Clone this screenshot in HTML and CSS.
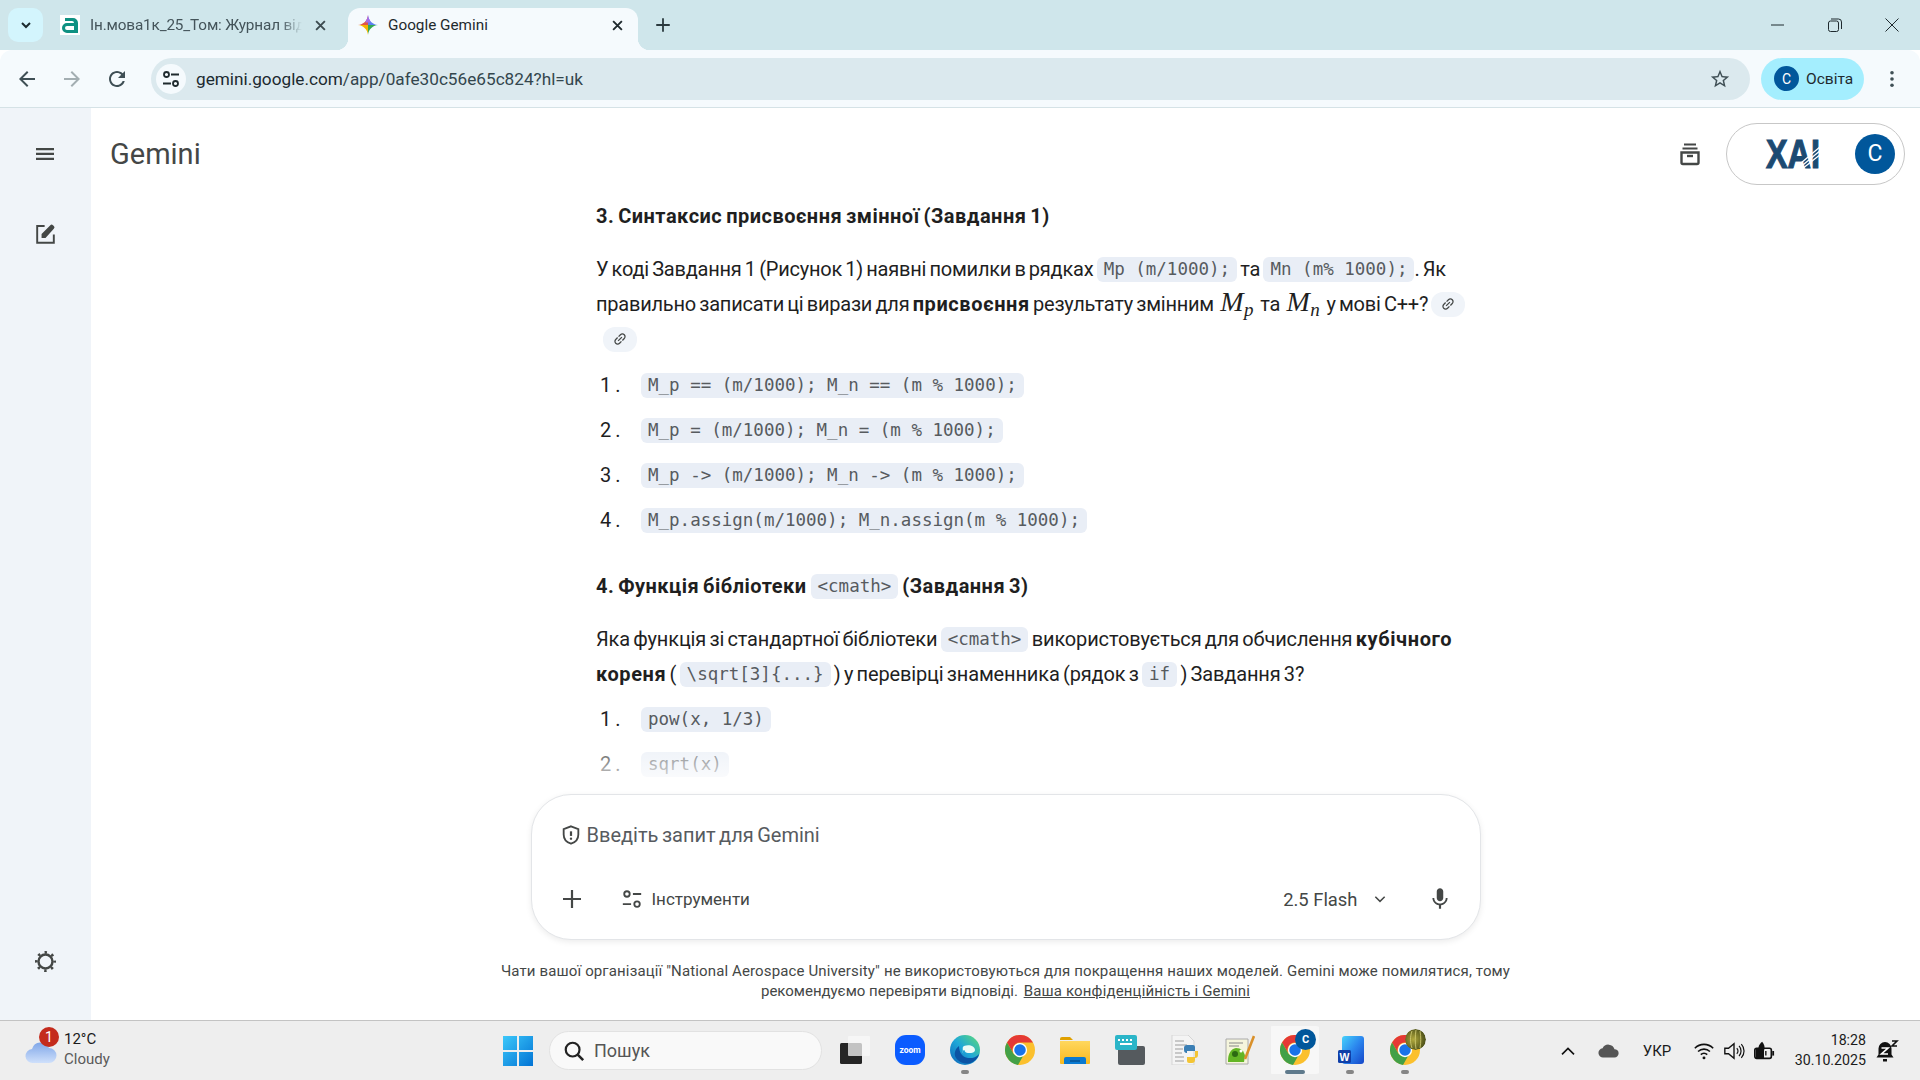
FILE: index.html
```html
<!DOCTYPE html>
<html lang="uk">
<head>
<meta charset="utf-8">
<title>Google Gemini</title>
<link rel="stylesheet" href="styles.css">
</head>
<body>
<svg class="defs" width="0" height="0">
  <defs>
    <symbol id="chrome" viewBox="0 0 24 24">
      <circle cx="12" cy="12" r="12" fill="#fbc02d"/>
      <path d="M1.6 6A12 12 0 0 1 22.4 6H12A6 6 0 0 0 6.8 15Z" fill="#e53935"/>
      <path d="M1.6 6A12 12 0 0 0 10.4 23.9L15.5 15A6 6 0 0 1 6.8 15Z" fill="#43a047"/>
      <circle cx="12" cy="12" r="5.7" fill="#fff"/>
      <circle cx="12" cy="12" r="4.6" fill="#1a73e8"/>
    </symbol>
    <symbol id="link" viewBox="0 0 24 24">
      <path transform="rotate(-45 12 12)" d="M3.9 12c0-1.71 1.39-3.1 3.1-3.1h4V7H7c-2.76 0-5 2.24-5 5s2.24 5 5 5h4v-1.9H7c-1.71 0-3.1-1.39-3.1-3.1zM8 13h8v-2H8v2zm9-6h-4v1.9h4c1.71 0 3.1 1.39 3.1 3.1s-1.39 3.1-3.1 3.1h-4V17h4c2.76 0 5-2.24 5-5s-2.24-5-5-5z"/>
    </symbol>
    <clipPath id="sparkclip">
      <path d="M12 0C12.600 6.600 17.400 11.400 24 12 17.400 12.600 12.600 17.400 12 24 11.400 17.400 6.600 12.600 0 12 6.600 11.400 11.400 6.600 12 0Z"/>
    </clipPath>
    <linearGradient id="winlogo" x1="0" y1="0" x2="1" y2="1">
      <stop offset="0" stop-color="#3cc8fa"/>
      <stop offset="1" stop-color="#0273d4"/>
    </linearGradient>
    <linearGradient id="edgeg" x1="0" y1="1" x2="1" y2="0">
      <stop offset="0" stop-color="#0c62b8"/>
      <stop offset=".5" stop-color="#1fa8d8"/>
      <stop offset="1" stop-color="#5fdc74"/>
    </linearGradient>
    <linearGradient id="wordg" x1="0" y1="0" x2="1" y2="1">
      <stop offset="0" stop-color="#46d2fb"/>
      <stop offset=".5" stop-color="#2b86ee"/>
      <stop offset="1" stop-color="#1546c8"/>
    </linearGradient>
    <linearGradient id="folderg" x1="0" y1="0" x2="0" y2="1">
      <stop offset="0" stop-color="#ffd75e"/>
      <stop offset="1" stop-color="#f9b91e"/>
    </linearGradient>
    <radialGradient id="olive" cx=".4" cy=".5" r=".6">
      <stop offset="0" stop-color="#b0a83c"/>
      <stop offset="1" stop-color="#4a4e18"/>
    </radialGradient>
  </defs>
</svg>

<div class="window">
  <div class="tabstrip">
    <button class="tabsearch"><svg class="i16" viewBox="0 0 24 24"><path d="M6 9l6 6 6-6" fill="none" stroke="#1b2a2e" stroke-width="3"/></svg></button>
    <div class="tab">
      <svg class="favicon" viewBox="0 0 20 20"><rect width="20" height="20" fill="#fff"/><path d="M5 3h8a5 5 0 0 1 5 5v10H7a5 5 0 0 1-5-5 5 5 0 0 1 5-5h7a2 2 0 0 0-2-2H5z M7 11a2 2 0 0 0 0 4h7v-4z" fill="#0f9182" fill-rule="evenodd"/></svg>
      <span class="tabtitle">Ін.мова1к_25_Том: Журнал відвідування</span>
      <svg class="tabclose" viewBox="0 0 24 24"><path d="M5 5l14 14M19 5L5 19" stroke="#3d4b50" stroke-width="3"/></svg>
    </div>
    <div class="tab active">
      <svg class="favicon" viewBox="0 0 24 24"><g clip-path="url(#sparkclip)"><rect width="12" height="12" fill="#e0544a"/><rect x="12" width="12" height="12" fill="#5a80f0"/><rect y="12" width="12" height="12" fill="#f4b400"/><rect x="12" y="12" width="12" height="12" fill="#34a853"/><rect x="9" y="0" width="6" height="9" fill="#a56be8"/></g></svg>
      <span class="tabtitle">Google Gemini</span>
      <svg class="tabclose" viewBox="0 0 24 24"><path d="M5 5l14 14M19 5L5 19" stroke="#1f2a2e" stroke-width="3"/></svg>
    </div>
    <svg class="newtab" viewBox="0 0 24 24"><path d="M12 3v18M3 12h18" stroke="#2b3a3f" stroke-width="2.4"/></svg>
    <div class="winctl">
      <svg class="wc" viewBox="0 0 14 14"><path d="M0 7h13" stroke="#1f2a2e" stroke-width="1"/></svg>
      <svg class="wc" viewBox="0 0 14 14"><rect x=".5" y="3" width="10" height="10.5" rx="2" fill="none" stroke="#1f2a2e"/><path d="M3 1h7.5a3 3 0 0 1 3 3v7" fill="none" stroke="#1f2a2e"/></svg>
      <svg class="wc" viewBox="0 0 14 14"><path d="M.5.5l13 13M13.500.5l-13 13" stroke="#1f2a2e"/></svg>
    </div>
  </div>

  <div class="toolbar">
    <svg class="navbtn" viewBox="0 0 24 24"><path fill="#3f4f55" d="M20 11H7.830l5.590-5.590L12 4l-8 8 8 8 1.410-1.410L7.830 13H20v-2z"/></svg>
    <svg class="navbtn" viewBox="0 0 24 24"><path fill="#a3aeb2" d="M12 4l-1.410 1.410L16.170 11H4v2h12.170l-5.580 5.590L12 20l8-8z"/></svg>
    <svg class="navbtn" viewBox="0 0 24 24"><path fill="#3f4f55" d="M17.650 6.350C16.200 4.900 14.210 4 12 4c-4.420 0-7.990 3.580-7.990 8s3.570 8 7.990 8c3.730 0 6.840-2.550 7.730-6h-2.080c-.820 2.330-3.040 4-5.650 4-3.310 0-6-2.690-6-6s2.690-6 6-6c1.660 0 3.140.690 4.220 1.780L13 11h7V4l-2.350 2.350z"/></svg>
    <div class="omnibox">
      <span class="siteinfo"><svg class="i20" viewBox="0 0 20 20"><circle cx="5.500" cy="5.500" r="2.500" fill="none" stroke="#1f2a2e" stroke-width="1.800"/><path d="M10 5.500h8M2 14.500h8" stroke="#1f2a2e" stroke-width="1.800"/><circle cx="14.500" cy="14.500" r="2.500" fill="none" stroke="#1f2a2e" stroke-width="1.800"/></svg></span>
      <span class="url">gemini.google.com<span class="urlpath">/app/0afe30c56e65c824?hl=uk</span></span>
      <svg class="star" viewBox="0 0 24 24"><path fill="#3f4f55" d="M22 9.240l-7.190-.620L12 2 9.190 8.630 2 9.240l5.460 4.730L5.820 21 12 17.270 18.180 21l-1.630-7.030L22 9.240zM12 15.400l-3.760 2.270 1-4.280-3.320-2.880 4.380-.380L12 6.100l1.710 4.040 4.380.380-3.320 2.880 1 4.280L12 15.400z"/></svg>
    </div>
    <div class="profile"><span class="avatar small">C</span><span>Освіта</span></div>
    <svg class="menudots" viewBox="0 0 6 20"><circle cx="3" cy="3" r="2" fill="#3f4f55"/><circle cx="3" cy="10" r="2" fill="#3f4f55"/><circle cx="3" cy="17" r="2" fill="#3f4f55"/></svg>
  </div>

  <div class="app">
    <aside class="sidebar">
      <svg class="side-icon menu" viewBox="0 0 24 24"><path fill="#444746" d="M3 18h18v-2.200H3V18zm0-5h18v-2.200H3V13zm0-7v2.200h18V6H3z"/></svg>
      <svg class="side-icon newchat" viewBox="0 0 24 24"><path d="M11 3.500H2.500v19h19V13" fill="none" stroke="#444746" stroke-width="2.200"/><path d="M7.500 17v-4.500L17.500 2.500a2 2 0 0 1 3 0l1 1a2 2 0 0 1 0 3L12 17z" fill="#444746"/></svg>
      <svg class="side-icon gear" viewBox="0 0 24 24"><circle cx="12" cy="12" r="8" fill="none" stroke="#444746" stroke-width="2.800"/><circle cx="12" cy="12" r="10.500" fill="none" stroke="#444746" stroke-width="3" stroke-dasharray="2.800 5.447" stroke-dashoffset="1.400"/></svg>
    </aside>

    <main class="main">
      <header class="topbar">
        <div class="brand">Gemini</div>
        <svg class="archive" viewBox="0 0 24 24"><path d="M6 2.500h12M4.500 6.500h15" stroke="#444746" stroke-width="2.200"/><path d="M3.500 10.500h17v10a1.500 1.500 0 0 1-1.500 1.500H5a1.500 1.500 0 0 1-1.500-1.500z" fill="none" stroke="#444746" stroke-width="2.400"/><path d="M9 14h6" stroke="#444746" stroke-width="2.400"/></svg>
        <div class="account">
          <svg class="xai" viewBox="0 0 56 32">
            <text x="1" y="30" textLength="54" lengthAdjust="spacingAndGlyphs" class="xai-text">XAI</text>
            <path d="M29 31L56 8M33 31L56 12M37 31L56 16" stroke="#fff" stroke-width="1.300"/>
          </svg>
          <span class="avatar big">C</span>
        </div>
      </header>

      <section class="chat">
        <div class="column">
          <h3 class="qhead">3. Синтаксис присвоєння змінної (Завдання 1)</h3>
          <p class="para">У коді Завдання 1 (Рисунок 1) наявні помилки в рядках <code>Mp (m/1000);</code> та <code>Mn (m% 1000);</code>. Як правильно записати ці вирази для <b>присвоєння</b> результату змінним <span class="math"><i>M</i><sub>p</sub></span> та <span class="math"><i>M</i><sub>n</sub></span> у мові C++? <span class="linkchip"><svg class="linkicon"><use href="#link"/></svg></span> <span class="linkchip wrapped"><svg class="linkicon"><use href="#link"/></svg></span></p>
          <ol class="opts first">
            <li><span class="num">1.</span><code>M_p == (m/1000); M_n == (m % 1000);</code></li>
            <li><span class="num">2.</span><code>M_p = (m/1000); M_n = (m % 1000);</code></li>
            <li><span class="num">3.</span><code>M_p -&gt; (m/1000); M_n -&gt; (m % 1000);</code></li>
            <li><span class="num">4.</span><code>M_p.assign(m/1000); M_n.assign(m % 1000);</code></li>
          </ol>
          <h3 class="qhead second">4. Функція бібліотеки <code>&lt;cmath&gt;</code> (Завдання 3)</h3>
          <p class="para loose">Яка функція зі стандартної бібліотеки <code>&lt;cmath&gt;</code> використовується для обчислення <b>кубічного кореня</b> ( <code>\sqrt[3]{...}</code> ) у перевірці знаменника (рядок з <code>if</code> ) Завдання 3?</p>
          <ol class="opts">
            <li><span class="num">1.</span><code>pow(x, 1/3)</code></li>
            <li><span class="num">2.</span><code>sqrt(x)</code></li>
          </ol>
        </div>
      </section>

      <div class="composer">
        <div class="prompt">
          <svg class="shield" viewBox="0 0 24 24"><path d="M12 2.500l8 3v6c0 5-3.400 8.600-8 10-4.600-1.400-8-5-8-10v-6z" fill="none" stroke="#444746" stroke-width="2"/><path d="M12 8v5" stroke="#444746" stroke-width="2.400"/><circle cx="12" cy="16" r="1.300" fill="#444746"/></svg>
          <span>Введіть запит для Gemini</span>
        </div>
        <div class="actions">
          <svg class="plus" viewBox="0 0 24 24"><path d="M12 3v18M3 12h18" stroke="#444746" stroke-width="2.200"/></svg>
          <svg class="tune" viewBox="0 0 24 24"><circle cx="6.500" cy="6.500" r="3" fill="none" stroke="#444746" stroke-width="2"/><path d="M13 6.500h9M2 17.500h9" stroke="#444746" stroke-width="2"/><circle cx="17.500" cy="17.500" r="3" fill="none" stroke="#444746" stroke-width="2"/></svg>
          <span class="tools">Інструменти</span>
          <span class="model">2.5 Flash</span>
          <svg class="chev" viewBox="0 0 24 24"><path d="M4 8l8 8 8-8" fill="none" stroke="#444746" stroke-width="2.600"/></svg>
          <svg class="mic" viewBox="0 0 24 24"><path fill="#444746" d="M12 14c1.660 0 2.990-1.340 2.990-3L15 5c0-1.660-1.340-3-3-3S9 3.340 9 5v6c0 1.660 1.340 3 3 3zm5.300-3c0 3-2.540 5.100-5.300 5.100S6.700 14 6.700 11H5c0 3.410 2.720 6.230 6 6.720V21h2v-3.280c3.280-.480 6-3.300 6-6.720h-1.700z"/></svg>
        </div>
      </div>
      <p class="disclaimer"><span class="dline">Чати вашої організації "National Aerospace University" не використовуються для покращення наших моделей. Gemini може помилятися, тому</span><br>рекомендуємо перевіряти відповіді. <a class="dlink">Ваша конфіденційність і Gemini</a></p>
    </main>
  </div>

  <footer class="taskbar">
    <div class="weather">
      <svg class="cloud" viewBox="0 0 32 26"><defs><linearGradient id="cl" x1="0" y1="0" x2="0" y2="1"><stop offset="0" stop-color="#7fa6e8"/><stop offset="1" stop-color="#cfe0fb"/></linearGradient></defs><path d="M8 24a7 7 0 0 1-1-14 9 9 0 0 1 17-1 7.500 7.500 0 0 1 0 15z" fill="url(#cl)"/></svg>
      <span class="badge">1</span>
      <div class="wtext"><span class="wtemp">12°C</span><span class="wdesc">Cloudy</span></div>
    </div>
    <button class="tb"><svg class="tbi" viewBox="0 0 30 30"><path fill="url(#winlogo)" d="M0 0h14v14H0zM16 0h14v14H16zM0 16h14v14H0zM16 16h14v14H16z"/></svg></button>
    <div class="search">
      <svg class="i22" viewBox="0 0 24 24"><circle cx="10.500" cy="10.500" r="7.500" fill="none" stroke="#222" stroke-width="2.400"/><path d="M16 16l6 6" stroke="#222" stroke-width="2.800"/></svg>
      <span>Пошук</span>
    </div>
    <div class="apps">
      <button class="tb"><svg class="tbi" viewBox="0 0 30 30"><rect x="0" y="8" width="22" height="21" rx="1.500" fill="#252525"/><rect x="8" y="1" width="22" height="20" rx="1" fill="#f8f8f8" opacity=".75"/></svg></button>
      <button class="tb"><svg class="tbi" viewBox="0 0 30 30"><rect width="30" height="30" rx="11" fill="#0b5cff"/><text x="15" y="18" class="zoomtxt">zoom</text></svg></button>
      <button class="tb dot"><svg class="tbi" viewBox="0 0 30 30"><circle cx="15" cy="15" r="15" fill="url(#edgeg)"/><path d="M14 11c5-2 11 0 11 4 0 2.500-3 3-6 3-3.500 0-4.500-1.500-4.500-3-1.500 0-2.500 2-1.500 3 2 .5 0 0 0 0 0-4-1-6 1-7z" fill="#ecfbf6"/><path d="M9 11c-4 3-5.500 8-3 12 3 4.500 10 7 15 5 4-1.500 7-5 8-9-3 3.500-7 4.500-11 4-6-.8-9-6-9-12z" fill="#0b53a4"/></svg></button>
      <button class="tb"><svg class="tbi"><use href="#chrome"/></svg></button>
      <button class="tb"><svg class="tbi" viewBox="0 0 30 30"><path d="M0 4a2 2 0 0 1 2-2h8l3 3h-13z" fill="#e0a000"/><path d="M0 6h30v22a1 1 0 0 1-1 1H1a1 1 0 0 1-1-1z" fill="url(#folderg)"/><path d="M4 24a2 2 0 0 1 2-2h18a2 2 0 0 1 2 2v5H4z" fill="#0a7ad1"/><path d="M10 26h10" stroke="#054f90" stroke-width="1.400"/></svg></button>
      <button class="tb"><svg class="tbi" viewBox="0 0 30 30"><rect x="3" y="11" width="27" height="19" rx="2" fill="#555a5e"/><rect y="0" width="22" height="15" rx="2" fill="#2bb5c8"/><path d="M3 5h2M7 5h2M11 5h2M15 5h2M5 9h12" stroke="#fff" stroke-width="2"/></svg></button>
      <button class="tb"><svg class="tbi" viewBox="0 0 30 30"><path d="M2 0h16l6 6v24H2z" fill="#f4f4f4" stroke="#d5d5d5"/><path d="M5 6h9M5 10h12M5 14h8M5 18h7M5 22h9M5 26h9" stroke="#c8c8c8" stroke-width="2"/><path d="M18 10h5a2 2 0 0 1 2 2v4h-8v2h-1a3 3 0 0 1-2-3v-2a3 3 0 0 1 3-3h1z" fill="#3b7fb5"/><path d="M28 16v4a3 3 0 0 1-3 3v2a3 3 0 0 1-3 3h-3a2 2 0 0 1-2-2v-4h8v-6z" fill="#f4c534"/></svg></button>
      <button class="tb"><svg class="tbi" viewBox="0 0 30 30"><path d="M1 4h22v25H1z" fill="#f5f5dc" stroke="#aaa"/><path d="M4 8h14M4 11h10" stroke="#888"/><path d="M3 26c0-8 3-12 8-13 5 0 8 3 9 8l-1 6H3z" fill="#63b525"/><circle cx="10" cy="19" r="3" fill="#2c6a12"/><circle cx="16" cy="16" r="1.500" fill="#fff"/><path d="M20 24L29 1" stroke="#d9902a" stroke-width="2.600"/></svg></button>
      <button class="tb current"><svg class="tbi"><use href="#chrome"/></svg><span class="corner blue">C</span></button>
      <button class="tb dot"><svg class="tbi" viewBox="0 0 30 30"><rect x="7" y="1" width="22" height="28" rx="3" fill="url(#wordg)"/><rect x="3" y="15" width="13" height="13" rx="1.500" fill="#0f3fa8"/><text x="9.500" y="25.500" class="wordtxt">W</text></svg></button>
      <button class="tb dot"><svg class="tbi"><use href="#chrome"/></svg><svg class="corner" viewBox="0 0 21 21"><circle cx="10.500" cy="10.500" r="10.500" fill="url(#olive)"/><path d="M7 2c-2 6-2 11 0 17M11 1c-1 6-1 13 0 19M15 2c1 6 1 11 0 17" fill="none" stroke="#d7d27a" stroke-width=".8"/></svg></button>
    </div>
    <div class="tray">
      <span class="tray-item chevup"><svg class="i16" viewBox="0 0 24 24"><path d="M3 17l9-9 9 9" fill="none" stroke="#111" stroke-width="2.400"/></svg></span>
      <span class="tray-item onedrive"><svg class="i22" viewBox="0 0 24 24"><path d="M6 19a5 5 0 0 1-1-10 7 7 0 0 1 13 1 4.500 4.500 0 0 1 0 9z" fill="#555"/></svg></span>
      <span class="tray-item lang">УКР</span>
      <span class="tray-item sm"><svg class="i22" viewBox="0 0 24 24"><path d="M2 9a14 14 0 0 1 20 0M5.500 12.500a9.500 9.500 0 0 1 13 0M8.500 16a5 5 0 0 1 7 0" fill="none" stroke="#111" stroke-width="1.700"/><circle cx="12" cy="19.500" r="1.600" fill="#111"/></svg></span>
      <span class="tray-item sm"><svg class="i22" viewBox="0 0 24 24"><path d="M2 9v6h4l6 5V4L6 9z" fill="none" stroke="#111" stroke-width="1.500"/><path d="M15 9a4 4 0 0 1 0 6M17.500 6.500a8 8 0 0 1 0 11M20 4.500a11 11 0 0 1 0 15" fill="none" stroke="#111" stroke-width="1.300"/></svg></span>
      <span class="tray-item sm"><svg class="i22" viewBox="0 0 24 24"><rect x="2" y="9" width="18" height="11" rx="2" fill="none" stroke="#111" stroke-width="1.800"/><path d="M21 12h2v5h-2z" fill="#111"/><path d="M3 9h9v11H3z" fill="#111"/><path d="M10 2C6 5 4 10 8 16c4-2 7-8 2-14z" fill="#111"/><path d="M14 17v-5" stroke="#111" stroke-width="1.500"/></svg></span>
      <span class="clock"><span>18:28</span><span>30.10.2025</span></span>
      <span class="tray-item bell"><svg class="i22 bellsvg" viewBox="0 0 24 24"><path d="M10 3a6.500 6.500 0 0 1 6.500 6.500v6l2 3H1.500l2-3v-6A6.500 6.500 0 0 1 10 3z" fill="#111"/><path d="M8 20h4v2.500H8z" fill="#111"/><path d="M6.500 9h6.500l-6.500 6h6.500" fill="none" stroke="#fff" stroke-width="1.700"/><path d="M17 2h5l-5 5h5" fill="none" stroke="#111" stroke-width="1.600"/></svg></span>
    </div>
  </footer>
</div>
</body>
</html>
```

FILE: styles.css
```css
* { box-sizing: border-box; }
html, body { margin: 0; height: 100%; overflow: hidden; }
body { font-family: Roboto, "Liberation Sans", sans-serif; color: #1f1f1f; background: #fff; }
.defs { position: absolute; }
button { border: 0; padding: 0; background: none; font: inherit; }

.window { display: flex; flex-direction: column; height: 1080px; width: 1920px; }

/* tab strip */
.tabstrip { display: flex; height: 50px; flex: none; background: #cfe6eb; align-items: flex-end; padding-left: 8px; }
.tabsearch { width: 35px; height: 34px; margin-bottom: 8px; border-radius: 10px; background: #d3f5fd; display: flex; align-items: center; justify-content: center; }
.i16 { width: 16px; height: 16px; }
.i20 { width: 20px; height: 20px; }
.i22 { width: 22px; height: 22px; }
.tab { display: flex; align-items: center; height: 42px; padding-bottom: 8px; font-size: 15.300px; color: #44545a; }
.tab:not(.active) { width: 299px; margin-left: 6px; padding-left: 11px; letter-spacing: -.15px; }
.tab.active { width: 290px; padding-left: 10px; padding-right: 11px; background: #f5fafd; border-radius: 12px 12px 0 0; color: #1f2a2e; position: relative; }
.tab.active::before, .tab.active::after { content: ""; position: absolute; bottom: 0; width: 12px; height: 12px; }
.tab.active::before { left: -12px; background: radial-gradient(circle at 0 0, transparent 12px, #f5fafd 12.500px); }
.tab.active::after { right: -12px; background: radial-gradient(circle at 100% 0, transparent 12px, #f5fafd 12.500px); }
.favicon { width: 20px; height: 20px; flex: none; }
.tabtitle { flex: 1; margin-left: 10px; white-space: nowrap; overflow: hidden; }
.tab:not(.active) .tabtitle { -webkit-mask-image: linear-gradient(90deg, #000 90%, transparent); mask-image: linear-gradient(90deg, #000 90%, transparent); margin-right: 11px; }
.tabclose { width: 15px; height: 15px; flex: none; margin-right: 20px; }
.tab.active .tabclose { margin-right: 2px; }
.newtab { width: 18px; height: 18px; margin: 0 0 16px 16px; }
.winctl { margin-left: auto; display: flex; gap: 43px; align-self: flex-start; padding: 18px 21px 0 0; }
.wc { width: 14px; height: 14px; }

/* toolbar */
.toolbar { display: flex; align-items: center; height: 58px; flex: none; background: #f5fafd; border-bottom: 1px solid #d5e2e6; border-radius: 12px 12px 0 0; padding: 0 0 0 15px; }
.navbtn { width: 24px; height: 24px; margin-right: 21px; flex: none; }
.omnibox { display: flex; align-items: center; width: 1599px; height: 42px; margin-left: 1px; border-radius: 21px; background: #dbe9ee; padding: 0 19px 0 5px; }
.siteinfo { width: 30px; height: 30px; border-radius: 50%; background: #f5fafd; display: flex; align-items: center; justify-content: center; flex: none; }
.url { margin-left: 10px; font-size: 17.200px; color: #1c2a30; white-space: nowrap; flex: 1; padding-top: 1px; }
.urlpath { color: #33464d; }
.star { width: 22px; height: 22px; flex: none; }
.profile { display: flex; align-items: center; gap: 7px; height: 42px; width: 103px; margin-left: 11px; padding-left: 13px; border-radius: 21px; background: #a4eefe; font-size: 15.500px; color: #1f2a2e; flex: none; }
.avatar { display: flex; align-items: center; justify-content: center; border-radius: 50%; background: #01579b; color: #fff; flex: none; }
.avatar.small { width: 25px; height: 25px; font-size: 14px; }
.avatar.big { width: 40px; height: 40px; font-size: 23px; }
.menudots { width: 6px; height: 18px; margin-left: 25px; flex: none; }

/* app */
.app { flex: 1; display: flex; min-height: 0; }
.sidebar { width: 91px; flex: none; background: #f0f4f9; display: flex; flex-direction: column; align-items: center; padding: 34px 1px 48px 0; }
.side-icon { width: 24px; height: 24px; flex: none; }
.side-icon.newchat { width: 21px; height: 21px; margin-top: 57px; }
.side-icon.gear { width: 21px; height: 21px; margin-top: auto; }

.main { flex: 1; min-width: 0; display: flex; flex-direction: column; }
.topbar { height: 91px; flex: none; display: flex; align-items: center; padding: 0 15px 0 19px; }
.brand { font-size: 29px; color: #444746; }
.archive { width: 24px; height: 24px; margin-left: auto; }
.account { display: flex; align-items: center; width: 179px; height: 62px; margin-left: 24px; padding-left: 38px; border: 1px solid #c7c7c7; border-radius: 31px; }
.xai { width: 56px; height: 32px; flex: none; overflow: visible; }
.xai-text { font: 700 41px "Liberation Sans", sans-serif; fill: #1c4a72; stroke: #1c4a72; stroke-width: 1.200px; }
.account .avatar.big { margin-left: 34px; }

/* conversation */
.chat { flex: 1; min-height: 0; overflow: hidden; position: relative; }
.chat::after { content: ""; position: absolute; left: 0; right: 0; bottom: 0; height: 64px; background: linear-gradient(180deg, rgba(255,255,255,0), #fff); }
.column { width: 949px; margin: 0 auto; padding-left: 65px; font-size: 20px; line-height: 35px; letter-spacing: -.22px; word-spacing: -1.500px; }
.qhead { margin: 0; font-size: 20px; font-weight: 700; line-height: 35px; letter-spacing: .48px; }
.qhead.second { margin-top: 31px; }
.para { margin: 18px 0 0; }
.para.loose { letter-spacing: -.15px; }
.para b { font-weight: 700; letter-spacing: .6px; }
code { display: inline-block; font: 400 17.500px/25px "DejaVu Sans Mono", monospace; letter-spacing: 0; word-spacing: 0; color: #575b5f; background: #e9eef6; border-radius: 6px; padding: 0 7px; vertical-align: 1px; white-space: pre; }
.opts { list-style: none; margin: 10px 0 0; padding: 0; }
.opts.first { margin-top: 11px; }
.opts li { display: flex; align-items: center; height: 35px; margin-bottom: 10px; }
.num { width: 45px; padding-left: 4px; letter-spacing: 4px; flex: none; font-size: 20px; }
.math { font: 28px/1 "Liberation Serif", serif; word-spacing: 0; letter-spacing: .5px; margin: 0 3px; }
.math sub { font: italic 19px/1 "Liberation Serif", serif; vertical-align: -5px; }
.linkchip { display: inline-flex; align-items: center; justify-content: center; width: 34px; height: 25px; border-radius: 12px; background: #f0f4f9; vertical-align: -1px; }
.linkchip.wrapped { margin-left: 7px; }
.linkicon { width: 16px; height: 16px; fill: #444746; }

/* composer */
.composer { width: 950px; height: 146px; flex: none; margin: 0 auto; border: 1px solid #e3e5e8; border-radius: 40px; background: #fff; box-shadow: 0 2px 6px rgba(0,0,0,.08); padding: 20px 27px 0 28px; position: relative; z-index: 1; }
.prompt { display: flex; align-items: center; height: 40px; font-size: 20px; word-spacing: -1.500px; color: #575b5f; }
.shield { width: 22px; height: 22px; flex: none; margin-right: 5px; }
.actions { display: flex; align-items: center; height: 48px; margin-top: 20px; color: #444746; }
.plus { width: 24px; height: 24px; flex: none; }
.tune { width: 22px; height: 22px; flex: none; margin-left: 37px; }
.tools { margin-left: 9px; font-size: 17px; }
.model { margin-left: auto; font-size: 18.400px; }
.chev { width: 14px; height: 14px; margin-left: 15px; flex: none; }
.mic { width: 26px; height: 26px; margin-left: 40px; flex: none; }
.disclaimer { margin: 21px 0 19px; text-align: center; font-size: 15px; line-height: 20px; color: #444746; }
.dline { letter-spacing: .13px; }
.dlink { text-decoration: underline; letter-spacing: .16px; margin-left: 2px; }

/* taskbar */
.taskbar { height: 60px; flex: none; display: flex; align-items: center; background: #eeeeee; border-top: 1px solid #c3c3c3; }
.weather { width: 490px; flex: none; height: 100%; display: flex; align-items: center; padding-left: 25px; position: relative; }
.cloud { width: 32px; height: 26px; flex: none; margin-top: 2px; }
.badge { position: absolute; left: 39px; top: 6px; width: 20px; height: 20px; border-radius: 50%; background: #c42b1c; color: #fff; font-size: 14px; line-height: 20px; text-align: center; }
.wtext { display: flex; flex-direction: column; margin: 0 0 3px 7px; font-size: 15px; line-height: 20px; }
.wtemp { color: #1b1b1b; }
.wdesc { color: #5a5a5a; }
.tb { width: 55px; height: 48px; flex: none; display: flex; align-items: center; justify-content: center; position: relative; border-radius: 6px; }
.tbi { width: 30px; height: 30px; }
.tb.dot::after { content: ""; position: absolute; left: 50%; bottom: 0; width: 8px; height: 4px; margin-left: -4px; border-radius: 2px; background: #858585; }
.tb.current { background: linear-gradient(#f7f7f7, #f7f7f7) center / 48px 48px no-repeat; }
.tb.current::after { content: ""; position: absolute; left: 50%; bottom: 0; width: 20px; height: 4px; margin-left: -10px; border-radius: 2px; background: #5f7a8c; }
.corner { position: absolute; left: 28px; top: 3px; width: 21px; height: 21px; border-radius: 50%; font-size: 11px; font-weight: 700; line-height: 21px; text-align: center; color: #fff; }
.corner.blue { background: #01579b; }
.zoomtxt { font: 700 8.500px Roboto, sans-serif; fill: #fff; text-anchor: middle; }
.wordtxt { font: 700 10.500px "Liberation Sans", sans-serif; fill: #fff; text-anchor: middle; }
.search { width: 273px; height: 39px; flex: none; margin: 0 5px 0 4px; display: flex; align-items: center; gap: 9px; padding-left: 13px; background: #f9f9f9; border: 1px solid #e2e2e2; border-radius: 20px; font-size: 18px; color: #555; }
.apps { display: flex; align-items: center; flex: none; margin-bottom: 1px; }
.tray { margin-left: auto; width: 372px; padding-right: 12px; display: flex; align-items: center; flex: none; }
.tray-item { display: flex; align-items: center; justify-content: center; flex: none; }
.chevup { width: 40px; }
.onedrive { width: 42px; }
.lang { width: 54px; margin-right: 5px; font-size: 15px; color: #1b1b1b; }
.sm { width: 30px; }
.clock { width: 87px; display: flex; flex-direction: column; align-items: flex-end; margin-bottom: 2px; font-size: 14.200px; line-height: 20px; color: #1b1b1b; flex: none; }
.bell { width: 42px; }
.bellsvg { width: 24px; height: 24px; }
```
